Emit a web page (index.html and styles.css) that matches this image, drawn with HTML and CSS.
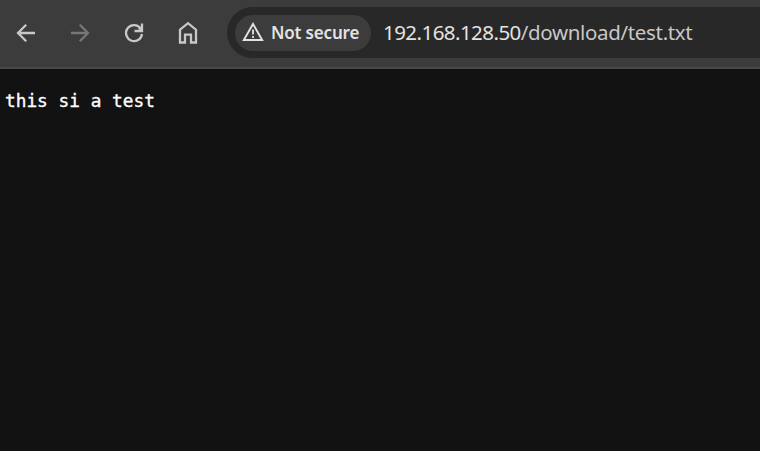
FILE: index.html
```html
<!DOCTYPE html>
<html lang="en">
<head>
<meta charset="utf-8">
<title>test.txt</title>
<link rel="stylesheet" href="styles.css">
</head>
<body>
<header class="toolbar">
  <nav class="nav">
    <svg class="icon" viewBox="0 0 24 24"><path d="M21 12H4.200M12.200 3.700L4 12l8.200 8.300"/></svg>
    <svg class="icon disabled" viewBox="0 0 24 24"><path d="M3 12h16.800M11.800 3.700L20 12l-8.200 8.300"/></svg>
    <svg class="icon" viewBox="0 0 24 24"><path d="M18.600 7.500A8 8 0 1 0 20 13M20 2.500v7.500h-7.500M17 6.500l2 2.500"/></svg>
    <svg class="icon home" viewBox="0 0 24 24"><path d="M4 21.500V8.700l8-6.500 8 6.500v12.800h-5v-7.800H9v7.800z"/></svg>
  </nav>
  <div class="address">
    <div class="chip">
      <svg class="warning" viewBox="0 0 22 20"><path d="M11 2L20.200 18H1.800z"/><path class="mark" d="M11 7.500v5M11 14v2"/></svg>
      <span class="label">Not secure</span>
    </div>
    <div class="url"><span class="host">192.168.128.50</span><span class="path">/download/test.txt</span></div>
  </div>
</header>
<main><pre>this si a test</pre></main>
</body>
</html>
```
FILE: styles.css
```css
* { box-sizing: border-box; }
body {
  margin: 0;
  height: 451px;
  overflow: hidden;
  background: #121212;
  font-family: "Noto Sans", "Open Sans", sans-serif;
}
.toolbar {
  display: flex;
  height: 69px;
  padding-top: 7px;
  background: #3c3c3c;
  border-bottom: 2px solid #484848;
}
.nav {
  display: flex;
  align-items: center;
  gap: 30px;
  width: 227px;
  height: 51px;
  padding-left: 14px;
}
.icon {
  width: 24px;
  height: 24px;
  flex: none;
  fill: none;
  stroke: #c8c8c8;
  stroke-width: 2.3;
}
.disabled { stroke: #777; }
.address {
  display: flex;
  align-items: center;
  flex: 1;
  height: 51px;
  padding-left: 8px;
  background: #282828;
  border-radius: 26px 0 0 26px;
}
.chip {
  display: flex;
  align-items: center;
  width: 136px;
  height: 36px;
  padding: 0 0 1px 7px;
  border-radius: 18px;
  background: #3c3c3c;
  color: #e3e3e3;
}
.warning {
  width: 22px;
  height: 20px;
  margin-right: 7px;
  fill: none;
  stroke: #e3e3e3;
  stroke-width: 1.9;
}
.mark { stroke-width: 1.8; }
.label {
  font-size: 17px;
  font-weight: 600;
  letter-spacing: -0.18px;
  white-space: nowrap;
}
.url {
  margin-left: 12px;
  padding-bottom: 2px;
  font-size: 20.5px;
  white-space: nowrap;
}
.host {
  color: #e3e3e3;
  letter-spacing: -0.55px;
}
.path {
  color: #c7c7c7;
  letter-spacing: -0.34px;
}
pre {
  margin: 20px 0 0 5px;
  font: 17.8px/24px "DejaVu Sans Mono", monospace;
  color: #fff;
  -webkit-text-stroke: 0.35px #fff;
}
```
